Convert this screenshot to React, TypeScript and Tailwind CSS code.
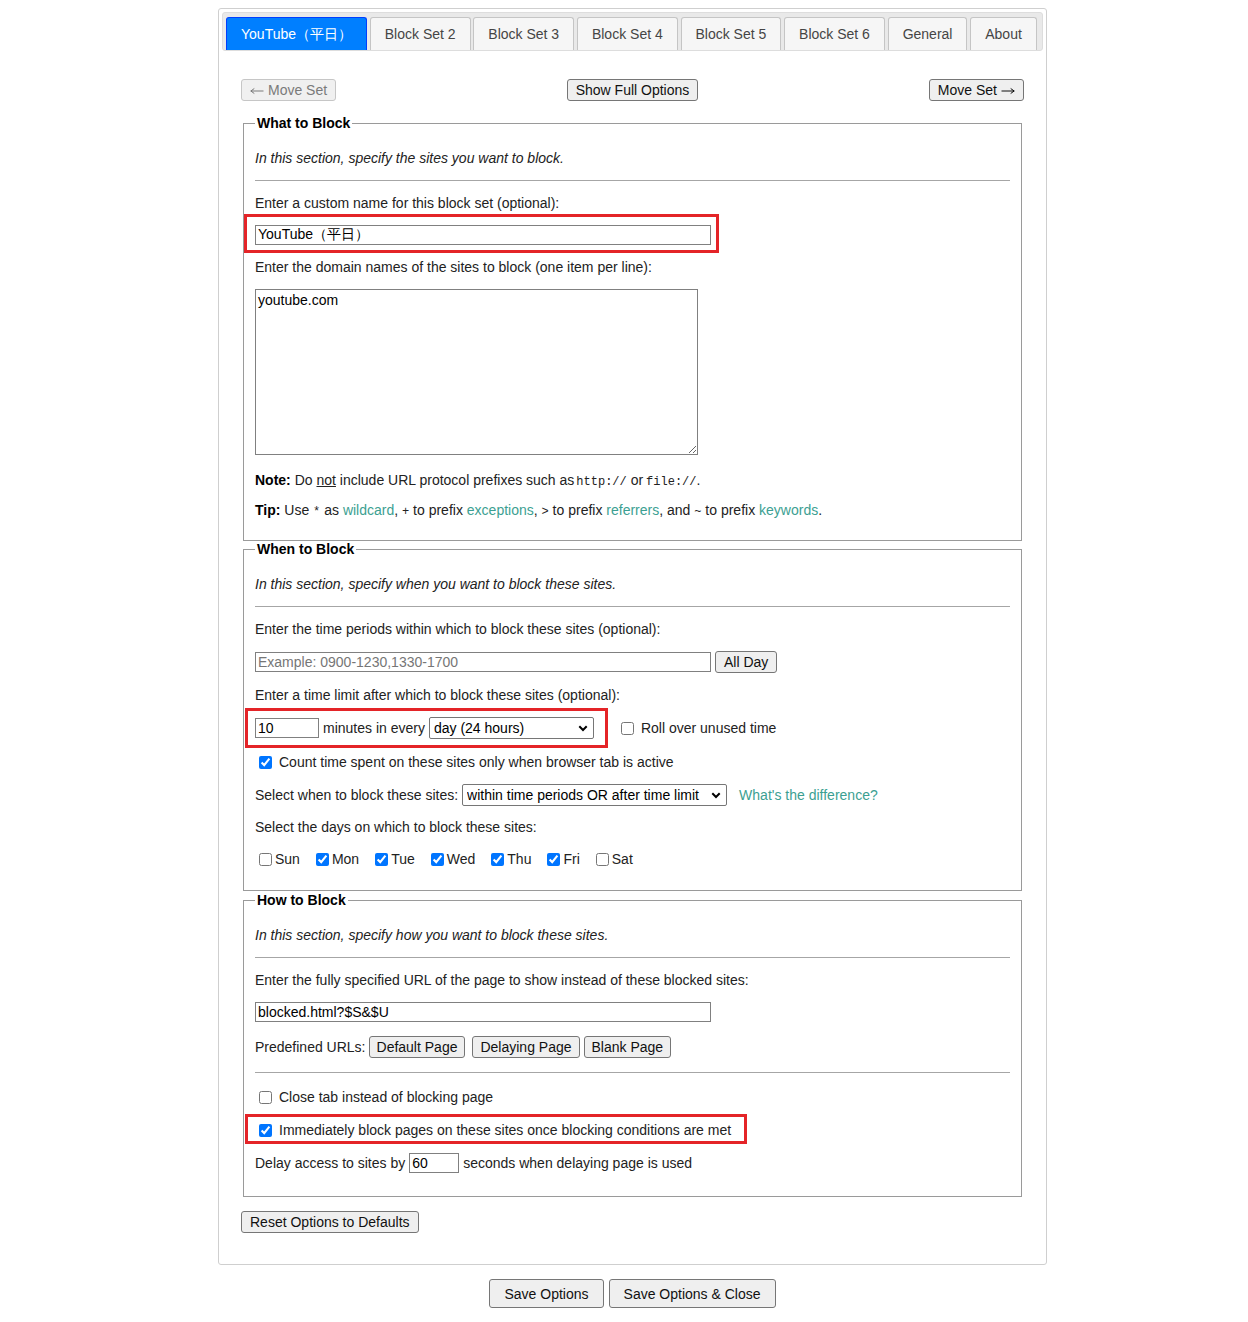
import React from "react";

const Btn = ({
  children,
  className = "",
  disabled = false,
}: {
  children: React.ReactNode;
  className?: string;
  disabled?: boolean;
}) => (
  <button
    type="button"
    disabled={disabled}
    className={`inline-flex items-center justify-center h-[22px] border rounded-[3px] leading-[16px] whitespace-nowrap ${
      disabled
        ? "border-[#c6c6c6] bg-[#f0f0f0] text-[#7a7a7a]"
        : "border-[#767676] bg-[#efefef] text-[#111]"
    } ${className}`}
  >
    {children}
  </button>
);

const Check = ({ checked = false, className = "" }: { checked?: boolean; className?: string }) => (
  <input
    type="checkbox"
    defaultChecked={checked}
    className={`w-[13px] h-[13px] shrink-0 accent-[#0075ff] ${className}`}
  />
);

const Chevron = () => (
  <svg
    className="pointer-events-none absolute right-[6px] top-[8px]"
    width="10"
    height="7"
    viewBox="0 0 10 7"
  >
    <path d="M1.3 1.3 L5 5 L8.7 1.3" fill="none" stroke="#000" strokeWidth="2" />
  </svg>
);

const ArrowLeft = () => (
  <svg width="14" height="8" viewBox="0 0 14 8" className="mr-[4px] mt-[1px]">
    <path d="M0.8 4 H13.5 M0.8 4 L4.3 1.5 M0.8 4 L4.3 6.5" fill="none" stroke="currentColor" strokeWidth="1" />
  </svg>
);

const ArrowRight = () => (
  <svg width="14" height="8" viewBox="0 0 14 8" className="ml-[4px] mt-[1px]">
    <path d="M0.5 4 H13.2 M13.2 4 L9.7 1.5 M13.2 4 L9.7 6.5" fill="none" stroke="currentColor" strokeWidth="1" />
  </svg>
);

const Sel = ({ value, className }: { value: string; className: string }) => (
  <span className={`relative inline-block h-[22px] ${className}`}>
    <select
      defaultValue={value}
      className="appearance-none w-full h-[22px] border border-[#767676] rounded-[2px] bg-white pl-[4px] pr-[20px] text-black leading-[16px]"
    >
      <option>{value}</option>
    </select>
    <Chevron />
  </span>
);

const Link = ({ children }: { children: React.ReactNode }) => (
  <span className="text-[#3c9f92]">{children}</span>
);

const Code = ({ children }: { children: React.ReactNode }) => (
  <span className="font-['Liberation_Mono',monospace] text-[12px] leading-[0]">{children}</span>
);

const Hr = () => <div className="mt-[14px] h-px bg-[#a6a6a6]" />;

const tabs = [
  "Block Set 2",
  "Block Set 3",
  "Block Set 4",
  "Block Set 5",
  "Block Set 6",
  "General",
  "About",
];

export default function App() {
  return (
    <div className="min-h-[1322px] bg-white pl-[17px] pt-[8px] font-['Liberation_Sans',Arial,sans-serif] text-[14px] leading-[16px] text-[#222]">
      <div className="mx-auto w-[829px] rounded-[3px] border border-[#cfcfcf] bg-white p-[3px]">
        {/* tab bar */}
        <div className="flex gap-[2.75px] rounded-[3px] border border-[#dddddd] bg-[#e9e9e9] px-[3px] pt-[4px]">
          <div className="flex h-[33px] items-center rounded-t-[3px] border border-b-0 border-[#003eff] bg-[#007fff] px-[14px] text-white">
            YouTube（平日）
          </div>
          {tabs.map((t) => (
            <div
              key={t}
              className="flex h-[33px] items-center rounded-t-[3px] border border-b-0 border-[#c5c5c5] bg-[#f6f6f6] px-[14px] text-[#454545]"
            >
              {t}
            </div>
          ))}
        </div>

        {/* panel */}
        <div className="px-[19px] pt-[28px] pb-[28px]">
          <div className="flex items-center justify-between">
            <Btn disabled className="px-[8px]">
              <ArrowLeft />
              Move Set
            </Btn>
            <Btn className="px-[8px]">Show Full Options</Btn>
            <Btn className="px-[8px]">
              Move Set
              <ArrowRight />
            </Btn>
          </div>

          {/* What to Block */}
          <fieldset className="mx-[2px] mt-[14px] border border-[#9a9a9a] px-[11px] pb-[22px]">
            <legend className="px-[2px] font-bold text-black">What to Block</legend>
            <p className="mt-[19px] h-[16px] italic">In this section, specify the sites you want to block.</p>
            <Hr />
            <p className="mt-[14px] h-[16px]">Enter a custom name for this block set (optional):</p>
            <div className="relative mt-[14px] h-[20px] w-[456px]">
              <input
                type="text"
                defaultValue="YouTube（平日）"
                className="h-[20px] w-[456px] border border-[#808080] bg-white px-[2px] text-black"
              />
              <span className="pointer-events-none absolute left-[-11px] top-[-11px] h-[39px] w-[475px] border-[3px] border-[#e42428]" />
            </div>
            <p className="mt-[14px] h-[16px]">Enter the domain names of the sites to block (one item per line):</p>
            <textarea
              defaultValue="youtube.com"
              className="mt-[14px] block h-[166px] w-[443px] resize border border-[#808080] bg-white px-[2px] pt-[2px] text-black"
            />
            <p className="mt-[17px] h-[16px] whitespace-nowrap">
              <b className="text-black">Note:</b> Do <u>not</u> include URL protocol prefixes such as
              <Code>
                <span className="ml-[2px]">http://</span>
              </Code>{" "}
              or<span className="ml-[3px]"><Code>file://</Code></span>.
            </p>
            <p className="mt-[14px] h-[16px] whitespace-nowrap">
              <b className="text-black">Tip:</b> Use <Code>*</Code> as <Link>wildcard</Link>, <Code>+</Code> to prefix{" "}
              <Link>exceptions</Link>, <Code>&gt;</Code> to prefix <Link>referrers</Link>, and <Code>~</Code> to prefix{" "}
              <Link>keywords</Link>.
            </p>
          </fieldset>

          {/* When to Block */}
          <fieldset className="mx-[2px] border border-[#9a9a9a] px-[11px] pb-[20px]">
            <legend className="px-[2px] font-bold text-black">When to Block</legend>
            <p className="mt-[19px] h-[16px] italic">In this section, specify when you want to block these sites.</p>
            <Hr />
            <p className="mt-[14px] h-[16px]">Enter the time periods within which to block these sites (optional):</p>
            <div className="mt-[14px] flex h-[22px] items-center">
              <input
                type="text"
                placeholder="Example: 0900-1230,1330-1700"
                className="h-[20px] w-[456px] border border-[#808080] bg-white px-[2px] text-black placeholder:text-[#767676]"
              />
              <Btn className="ml-[4px] px-[8px]">All Day</Btn>
            </div>
            <p className="mt-[14px] h-[16px]">Enter a time limit after which to block these sites (optional):</p>
            <div className="mt-[14px] flex h-[22px] items-center">
              <div className="relative flex h-[22px] items-center">
                <input
                  type="text"
                  defaultValue="10"
                  className="h-[20px] w-[64px] border border-[#808080] bg-white px-[2px] text-black"
                />
                <span className="ml-[4px]">minutes in every</span>
                <Sel value="day (24 hours)" className="ml-[4px] w-[165px]" />
                <span className="pointer-events-none absolute left-[-10px] top-[-9px] h-[40px] w-[363px] border-[3px] border-[#e42428]" />
              </div>
              <Check className="ml-[27px] mr-[7px]" />
              <span>Roll over unused time</span>
            </div>
            <div className="mt-[12px] flex h-[22px] items-center">
              <Check checked className="ml-[4px] mr-[7px]" />
              <span>Count time spent on these sites only when browser tab is active</span>
            </div>
            <div className="mt-[11px] flex h-[22px] items-center">
              <span>Select when to block these sites:</span>
              <Sel value="within time periods OR after time limit" className="ml-[4px] w-[265px]" />
              <span className="ml-[12px]">
                <Link>What's the difference?</Link>
              </span>
            </div>
            <p className="mt-[13px] h-[16px]">Select the days on which to block these sites:</p>
            <div className="mt-[13px] flex h-[22px] items-center gap-[12px]">
              {[
                ["Sun", false],
                ["Mon", true],
                ["Tue", true],
                ["Wed", true],
                ["Thu", true],
                ["Fri", true],
                ["Sat", false],
              ].map(([d, c]) => (
                <label key={d as string} className="flex items-center">
                  <Check checked={c as boolean} className="ml-[4px] mr-[3px]" />
                  <span>{d as string}</span>
                </label>
              ))}
            </div>
          </fieldset>

          {/* How to Block */}
          <fieldset className="mx-[2px] mt-[1px] border border-[#9a9a9a] px-[11px] pb-[22px]">
            <legend className="px-[2px] font-bold text-black">How to Block</legend>
            <p className="mt-[19px] h-[16px] italic">In this section, specify how you want to block these sites.</p>
            <Hr />
            <p className="mt-[14px] h-[16px]">Enter the fully specified URL of the page to show instead of these blocked sites:</p>
            <div className="mt-[14px] flex h-[20px] items-center">
              <input
                type="text"
                defaultValue="blocked.html?$S&$U"
                className="h-[20px] w-[456px] border border-[#808080] bg-white px-[2px] text-black"
              />
            </div>
            <div className="mt-[14px] flex h-[22px] items-center">
              <span>Predefined URLs:</span>
              <Btn className="ml-[3px] px-[7px]">Default Page</Btn>
              <Btn className="ml-[7px] px-[7px]">Delaying Page</Btn>
              <Btn className="ml-[4px] px-[7px]">Blank Page</Btn>
            </div>
            <Hr />
            <div className="mt-[13px] flex h-[22px] items-center">
              <Check className="ml-[4px] mr-[7px]" />
              <span>Close tab instead of blocking page</span>
            </div>
            <div className="relative mt-[11px] flex h-[22px] items-center">
              <Check checked className="ml-[4px] mr-[7px]" />
              <span>Immediately block pages on these sites once blocking conditions are met</span>
              <span className="pointer-events-none absolute left-[-10px] top-[-5px] h-[30px] w-[502px] border-[3px] border-[#e42428]" />
            </div>
            <div className="mt-[11px] flex h-[22px] items-center">
              <span>Delay access to sites by</span>
              <input
                type="text"
                defaultValue="60"
                className="ml-[4px] h-[20px] w-[50px] border border-[#808080] bg-white px-[2px] text-black"
              />
              <span className="ml-[4px]">seconds when delaying page is used</span>
            </div>
          </fieldset>

          <div className="mt-[14px] flex">
            <Btn className="px-[8px]">Reset Options to Defaults</Btn>
          </div>
        </div>
      </div>

      <div className="mx-auto mt-[14px] flex w-[829px] justify-center gap-[5px]">
        <Btn className="h-[29px] px-[14px]">Save Options</Btn>
        <Btn className="h-[29px] px-[14px]">Save Options &amp; Close</Btn>
      </div>
    </div>
  );
}
